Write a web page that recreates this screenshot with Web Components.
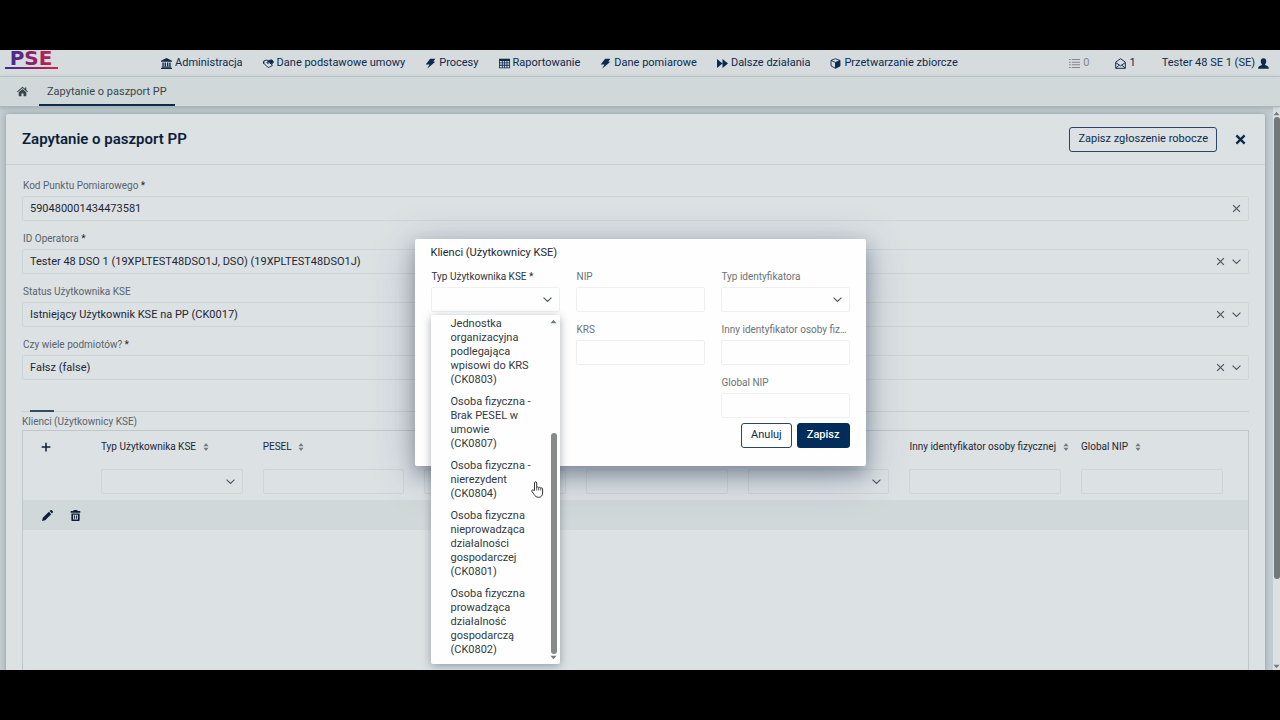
<!DOCTYPE html>
<html lang="pl">
<head>
<meta charset="utf-8">
<meta name="viewport" content="width=device-width, initial-scale=1">
<title>Zapytanie o paszport PP</title>
<style>
	html, body {
		height: 100%;
		margin: 0;
		background: #000;
	}
	body {
		font-family: Roboto, "Liberation Sans", sans-serif;
		font-size: 11px;
		line-height: 16px;
		color: #1d2733;
		--navy: #0c2a4d;
		--card: #dce1e4;
		--line: #c9d0d3;
	}
</style>
</head>
<body>
<app-shell>
	<app-header slot="header">
		<nav-item icon="bank">Administracja</nav-item>
		<nav-item icon="handshake">Dane podstawowe umowy</nav-item>
		<nav-item icon="bolt">Procesy</nav-item>
		<nav-item icon="table">Raportowanie</nav-item>
		<nav-item icon="bolt">Dane pomiarowe</nav-item>
		<nav-item icon="forward">Dalsze działania</nav-item>
		<nav-item icon="cube">Przetwarzanie zbiorcze</nav-item>
		<nav-item slot="user" icon="list" muted>0</nav-item>
		<nav-item slot="user" icon="mail">1</nav-item>
		<nav-item slot="user" icon="user" trailing>Tester 48 SE 1 (SE)</nav-item>
	</app-header>
	<tab-strip slot="tabs">Zapytanie o paszport PP</tab-strip>
	<form-card heading="Zapytanie o paszport PP" action="Zapisz zgłoszenie robocze">
		<form-field label="Kod Punktu Pomiarowego" value="590480001434473581" required clearable></form-field>
		<form-field label="ID Operatora" kind="select" value="Tester 48 DSO 1 (19XPLTEST48DSO1J, DSO) (19XPLTEST48DSO1J)" required clearable></form-field>
		<form-field label="Status Użytkownika KSE" kind="select" value="Istniejący Użytkownik KSE na PP (CK0017)" clearable></form-field>
		<form-field label="Czy wiele podmiotów?" kind="select" value="Fałsz (false)" required clearable></form-field>
		<client-grid></client-grid>
	</form-card>
	<client-dialog slot="overlay"></client-dialog>
</app-shell>

<script>
const ICONS = {
	bank: '<path d="M8 0 0 4v1.500h16V4zM2 6.500h2V12H2zM5.300 6.500h2V12h-2zM8.700 6.500h2V12h-2zM12 6.500h2V12h-2zM1 12.500h14V14H1zM0 14.500h16V16H0z"/>',
	handshake: '<path d="M1 4.500 4.500 3l3 .7M15 5l-3-2-3.500.5L5.500 7c1 1.300 2.500.8 3.500-.5l5 4M1.500 8l5 5c1 1 2 .8 2.500 0 1 .5 2 0 2.300-1 1 .2 1.900-.4 2-1.500" fill="none" stroke="currentColor" stroke-width="1.400"/><path d="M8 3.500 13 2l3 4-3 3-4-3-3 1z"/><path d="M0 5l2-1v5L0 8z"/>',
	bolt: '<path d="M7.500 1H15l-3 4.500h3L3 15.500 6.500 9.500H1z"/>',
	table: '<path fill-rule="evenodd" d="M0 1h16v14H0zM1.200 4.500v2h3v-2zm4.200 0v2h2.200v-2zm3.400 0v2H11v-2zm3.400 0v2h2.600v-2zM1.200 7.800v2h3v-2zm4.200 0v2h2.200v-2zm3.400 0v2H11v-2zm3.400 0v2h2.600v-2zM1.200 11.200v2.600h3v-2.600zm4.200 0v2.600h2.200v-2.600zm3.400 0v2.600H11v-2.600zm3.400 0v2.600h2.600v-2.600z"/>',
	forward: '<path d="M0 1.500 8 8l-8 6.500zM8 1.500 16 8l-8 6.500z"/>',
	cube: '<path d="M8 1 1.500 3.500v8L8 15l6.500-3.500v-8zM1.500 3.500 8 6.500l6.500-3M8 6.500V15" fill="none" stroke="currentColor" stroke-width="1.300"/><path d="M8 6.500l6.500-3v8L8 15z"/>',
	list: '<path d="M0 1.500h2.500v1.500H0zM4 1.500h12v1.500H4zM0 5.300h2.500v1.500H0zM4 5.300h12v1.500H4zM0 9.100h2.500v1.500H0zM4 9.100h12v1.500H4zM0 13h2.500v1.500H0zM4 13h12v1.500H4z"/>',
	mail: '<path d="M1 6 8 1l7 5v9H1zM1.500 7 8 11.500 14.500 7M1.500 14.500 6 10.500M14.500 14.500 10 10.500" fill="none" stroke="currentColor" stroke-width="1.400"/>',
	user: '<path d="M8 0.500c2.600 0 4 1.900 4 4.200S10.500 9.300 10 9.800c.5 1.100 5.800 1 5.800 5.700H.2c0-4.700 5.300-4.600 5.800-5.700-.5-.5-2-2.800-2-5.100S5.400.5 8 .5z"/>',
	home: '<path d="M8 1 0 8l1 1 7-6 7 6 1-1-2.500-2.200V2h-2v2zM8 4.500 2.500 9v6h4v-4h3v4h4V9z"/>',
	pencil: '<path d="M0 16l1.200-4.600L10 2.600 13.400 6l-8.800 8.800zM11 1.600 12.500.2c.5-.4 1.300-.3 1.700.1l1.500 1.500c.4.5.4 1.200 0 1.700L14.400 5z"/>',
	trash: '<path fill-rule="evenodd" d="M5.500 0h5l.7 1.500H15V4H1V1.500h3.800zM2 5h12v9.500c0 .9-.6 1.500-1.500 1.500h-9C2.600 16 2 15.400 2 14.500zm2.500 1.800v7h7v-7zM6 8h1.300v4.800H6zm2.700 0H10v4.800H8.700z"/>',
	plus: '<path d="M8 1v14M1 8h14" fill="none" stroke="currentColor" stroke-width="2.400"/>',
	close: '<path d="M2 2l12 12M14 2 2 14" fill="none" stroke="currentColor" stroke-width="3.400"/>',
	clear: '<path d="M2 2l12 12M14 2 2 14" fill="none" stroke="currentColor" stroke-width="2.200"/>',
	chevron: '<path d="M1 4.500 8 11.500l7-7" fill="none" stroke="currentColor" stroke-width="2"/>',
	sort: '<path d="M8 0l5 6.500H3zM8 16l5-6.500H3z"/>',
	up: '<path d="M8 4l7 8H1z"/>',
	down: '<path d="M8 12l7-8H1z"/>'
};

// <svg-icon name="..."> - size comes from --size, colour from the text
class SvgIcon extends HTMLElement {
	constructor() {
		super();
		this.attachShadow({mode: 'open'});
	}

	connectedCallback() {
		this.shadowRoot.innerHTML = `
		<style>
			:host { display: inline-block; flex: none; width: var(--size, 11px); height: var(--size, 11px); }
			svg { display: block; width: 100%; height: 100%; fill: currentColor; }
		</style>
		<svg viewBox="0 0 16 16" aria-hidden="true">${ICONS[this.getAttribute('name')]}</svg>`;
	}
}
customElements.define('svg-icon', SvgIcon);

// vertical scrollbar; --before, --thumb and --after share the track
class ScrollRail extends HTMLElement {
	constructor() {
		super();
		this.attachShadow({mode: 'open'}).innerHTML = `
		<style>
			:host { display: flex; flex-direction: column; align-items: center; color: #767c7d; }
			svg-icon { --size: 7px; }
			.track { flex: 1; align-self: stretch; display: flex; flex-direction: column; align-items: center; }
			.before { flex: var(--before, 0); }
			.thumb { flex: var(--thumb, 1); width: 6px; border-radius: 3px; background: var(--thumb-color, #71797b); }
			.after { flex: var(--after, 0); }
		</style>
		<svg-icon name="up"></svg-icon>
		<div class="track"><div class="before"></div><div class="thumb"></div><div class="after"></div></div>
		<svg-icon name="down"></svg-icon>`;
	}
}
customElements.define('scroll-rail', ScrollRail);

class AppShell extends HTMLElement {
	constructor() {
		super();
		this.attachShadow({mode: 'open'}).innerHTML = `
		<style>
			:host { display: block; box-sizing: border-box; height: 100vh; padding: 50px 0; }
			.screen {
				position: relative;
				display: flex;
				flex-direction: column;
				height: 100%;
				overflow: hidden;
				background: #c2cbcf;
			}
			.body { flex: 1; min-height: 0; display: flex; }
			main { flex: 1; min-width: 0; padding: 7px 8px 0 6px; overflow: hidden; }
			scroll-rail {
				width: 7px;
				padding-top: 3px;
				background: #dce1e4;
				--thumb: 460;
				--after: 84;
			}
		</style>
		<div class="screen">
			<slot name="header"></slot>
			<slot name="tabs"></slot>
			<div class="body">
				<main><slot></slot></main>
				<scroll-rail></scroll-rail>
			</div>
			<slot name="overlay"></slot>
		</div>`;
	}
}
customElements.define('app-shell', AppShell);

class AppHeader extends HTMLElement {
	constructor() {
		super();
		this.attachShadow({mode: 'open'}).innerHTML = `
		<style>
			:host { display: block; flex: none; }
			header {
				display: flex;
				align-items: center;
				height: 26px;
				padding: 0 11px 0 4px;
				background: #d6dbdd;
				border-bottom: 1px solid #bfc6c9;
			}
			.logo {
				align-self: flex-start;
				width: 54px;
				height: 20px;
				margin-right: 103px;
			}
			.logo svg { display: block; width: 100%; height: 100%; }
			nav, .user { display: flex; align-items: center; }
			nav { gap: 20px; }
			.user { gap: 26px; margin-left: auto; }
		</style>
		<header>
			<a class="logo" href="#" aria-label="PSE">
				<svg viewBox="0 0 54 20">
					<defs>
						<linearGradient id="brand" gradientUnits="userSpaceOnUse" x1="0" x2="54" y1="0" y2="0">
							<stop offset="0" stop-color="#2b2f9c"/>
							<stop offset=".5" stop-color="#86246a"/>
							<stop offset="1" stop-color="#d02444"/>
						</linearGradient>
					</defs>
					<text x="27" y="15" text-anchor="middle" font-family="DejaVu Sans" font-weight="700" font-size="20" fill="url(#brand)">PSE</text>
					<rect x="1" y="17" width="53" height="2" fill="url(#brand)"/>
				</svg>
			</a>
			<nav><slot></slot></nav>
			<div class="user"><slot name="user"></slot></div>
		</header>`;
	}
}
customElements.define('app-header', AppHeader);

class NavItem extends HTMLElement {
	constructor() {
		super();
		this.attachShadow({mode: 'open'});
	}

	connectedCallback() {
		this.shadowRoot.innerHTML = `
		<style>
			:host { display: block; }
			a { display: flex; align-items: center; gap: 3px; color: var(--navy); text-decoration: none; white-space: nowrap; }
			:host([trailing]) a { flex-direction: row-reverse; }
			:host([muted]) a { color: #80878b; }
		</style>
		<a href="#"><svg-icon name="${this.getAttribute('icon')}"></svg-icon><span><slot></slot></span></a>`;
	}
}
customElements.define('nav-item', NavItem);

class TabStrip extends HTMLElement {
	constructor() {
		super();
		this.attachShadow({mode: 'open'}).innerHTML = `
		<style>
			:host {
				display: block;
				flex: none;
				position: relative;
				background: #d1d8da;
				border-bottom: 1px solid #adb6ba;
				box-shadow: 0 1px 4px rgba(60, 75, 85, .25);
			}
			nav { display: flex; height: 29px; padding-left: 17px; }
			a { display: flex; align-items: center; color: #3a444c; text-decoration: none; }
			.current { margin-left: 11px; padding: 0 8px; box-shadow: inset 0 -2px var(--navy); }
		</style>
		<nav>
			<a href="#" aria-label="Start"><svg-icon name="home"></svg-icon></a>
			<a class="current" href="#" aria-current="page"><slot></slot></a>
		</nav>`;
	}
}
customElements.define('tab-strip', TabStrip);

class FormCard extends HTMLElement {
	constructor() {
		super();
		this.attachShadow({mode: 'open'});
	}

	connectedCallback() {
		this.shadowRoot.innerHTML = `
		<style>
			:host {
				display: block;
				min-height: 100%;
				background: var(--card);
				border-radius: 2px;
				box-shadow: 0 0 5px rgba(60, 80, 95, .4);
			}
			header {
				display: flex;
				align-items: center;
				height: 50px;
				padding: 0 19px 0 16px;
				border-bottom: 1px solid var(--line);
			}
			h1 { flex: 1; margin: 0; font-size: 15px; font-weight: 600; line-height: 20px; color: #0d1f38; }
			button { font: inherit; color: var(--navy); background: none; cursor: pointer; }
			.save { height: 25px; padding: 0 8px; border: 1px solid #2c4468; border-radius: 3px; }
			.close { display: flex; margin-left: 18px; padding: 0; border: 0; }
			.fields { padding: 11px 16px 0; }
		</style>
		<header>
			<h1>${this.getAttribute('heading')}</h1>
			<button class="save" type="button">${this.getAttribute('action')}</button>
			<button class="close" type="button" aria-label="Zamknij"><svg-icon name="close"></svg-icon></button>
		</header>
		<div class="fields"><slot></slot></div>`;
	}
}
customElements.define('form-card', FormCard);

// input or select box with its clear and chevron marks, used in fields and in grid filters
class ControlBox extends HTMLElement {
	constructor() {
		super();
		this.attachShadow({mode: 'open'});
	}

	connectedCallback() {
		const label = this.getAttribute('label') || '';
		const value = this.getAttribute('value') || '';
		const isSelect = this.getAttribute('kind') === 'select';
		const caption = label ? `<label for="control">${label}${this.hasAttribute('required') ? ' <span>*</span>' : ''}</label>` : '';
		const name = label ? '' : `aria-label="${this.getAttribute('name')}"`;
		const control = isSelect
			? `<select id="control" ${name}><option>${value}</option></select>`
			: `<input id="control" type="text" ${name} value="${value}">`;
		this.shadowRoot.innerHTML = `
		<style>
			:host { display: block; min-width: 0; }
			label {
				display: block;
				overflow: hidden;
				padding-left: 1px;
				font-size: 10px;
				line-height: 20px;
				color: var(--label, #59636a);
				white-space: nowrap;
				text-overflow: ellipsis;
			}
			label span { color: #1d2733; }
			.box { display: grid; align-items: center; }
			.box > * { grid-area: 1 / 1; }
			input, select {
				box-sizing: border-box;
				width: 100%;
				min-width: 0;
				height: 25px;
				margin: 0;
				padding: 0 7px;
				border: 1px solid var(--edge, #ced5d8);
				border-radius: 2px;
				background: none;
				color: inherit;
				font: inherit;
				appearance: none;
				outline: none;
			}
			.marks { display: flex; gap: 7px; justify-self: end; padding-right: 8px; color: #4d575e; pointer-events: none; }
			.marks button { display: flex; padding: 0; border: 0; background: none; color: inherit; pointer-events: auto; }
			.marks svg-icon { --size: 9px; }
		</style>
		${caption}
		<div class="box">
			${control}
			<span class="marks">
				${this.hasAttribute('clearable') ? '<button type="button" aria-label="Wyczyść"><svg-icon name="clear"></svg-icon></button>' : ''}
				${isSelect ? '<svg-icon name="chevron"></svg-icon>' : ''}
			</span>
		</div>`;
	}
}
customElements.define('control-box', ControlBox);

class FormField extends ControlBox {
	connectedCallback() {
		super.connectedCallback();
		this.style.marginBottom = '8px';
	}
}
customElements.define('form-field', FormField);

class ClientGrid extends HTMLElement {
	constructor() {
		super();
		const columns = [
			['Typ Użytkownika KSE', 'select'],
			['PESEL', 'text'],
			['NIP', 'text'],
			['KRS', 'text'],
			['Typ identyfikatora', 'select'],
			['Inny identyfikator osoby fizycznej', 'text', 'wide'],
			['Global NIP', 'text']
		];
		this.attachShadow({mode: 'open'}).innerHTML = `
		<style>
			:host { display: block; font-size: 10px; }
			.rule { height: 1px; margin-top: 31px; border-top: 1px solid var(--line); }
			.rule::before { content: ""; display: block; width: 24px; height: 2px; margin: -2px 0 0 8px; background: #334e64; }
			h2 { margin: 0; font-size: 10px; font-weight: 400; line-height: 17px; color: #59636a; }
			.frame { min-height: 260px; border: 1px solid #bfc7cb; }
			table { width: 100%; border-collapse: collapse; table-layout: fixed; }
			col.tools { width: 68px; }
			col.field { width: 13.200%; }
			col.wide { width: 14%; }
			th { height: 32px; padding: 0 10px; text-align: left; font-weight: 400; white-space: nowrap; }
			th svg-icon { --size: 8px; margin-left: 3px; color: #727b80; vertical-align: -1px; }
			.filters td { height: 37px; padding: 0 10px; }
			.row td { height: 30px; padding: 0 0 0 19px; background: #d1d8da; }
			button { display: inline-flex; padding: 0; border: 0; background: none; color: #0d1f38; vertical-align: middle; }
			th button { margin-left: 8px; }
			.row button + button { margin-left: 15px; }
			.add svg-icon { --size: 10px; margin: 0; color: #0d1f38; }
		</style>
		<div class="rule"></div>
		<h2>Klienci (Użytkownicy KSE)</h2>
		<div class="frame">
			<table>
				<colgroup>
					<col class="tools">
					${columns.map(c => `<col class="${c[2] || 'field'}">`).join('')}
					<col>
				</colgroup>
				<thead>
					<tr>
						<th><button class="add" type="button" aria-label="Dodaj"><svg-icon name="plus"></svg-icon></button></th>
						${columns.map(c => `<th scope="col">${c[0]} <svg-icon name="sort"></svg-icon></th>`).join('')}
						<th></th>
					</tr>
					<tr class="filters">
						<td></td>
						${columns.map(c => `<td><control-box kind="${c[1]}" name="${c[0]}"></control-box></td>`).join('')}
						<td></td>
					</tr>
				</thead>
				<tbody>
					<tr class="row">
						<td colspan="9">
							<button type="button" aria-label="Edytuj"><svg-icon name="pencil"></svg-icon></button>
							<button type="button" aria-label="Usuń"><svg-icon name="trash"></svg-icon></button>
						</td>
					</tr>
				</tbody>
			</table>
		</div>`;
	}
}
customElements.define('client-grid', ClientGrid);

// open list of a select, scrolled to its end
class OptionList extends HTMLElement {
	constructor() {
		super();
		this.attachShadow({mode: 'open'}).innerHTML = `
		<style>
			:host {
				display: flex;
				background: #fefefe;
				border-radius: 2px;
				box-shadow: 0 2px 8px rgba(40, 50, 60, .4);
			}
			ul { flex: 1; min-width: 0; margin: 0; padding: 2px 0 7px; list-style: none; }
			::slotted(li) { padding: 0 14px 8px 20px; line-height: 14px; color: #333a40; }
			::slotted(li:last-child) { padding-bottom: 0; }
			scroll-rail {
				width: 8px;
				margin: 3px 2px 3px 0;
				--before: 107;
				--thumb: 217;
				--thumb-color: #868a89;
			}
		</style>
		<ul role="listbox" aria-label="Typ Użytkownika KSE"><slot></slot></ul>
		<scroll-rail></scroll-rail>`;
	}
}
customElements.define('option-list', OptionList);

class ClientDialog extends HTMLElement {
	constructor() {
		super();
		this.attachShadow({mode: 'open'}).innerHTML = `
		<style>
			:host {
				position: absolute;
				inset: 0;
				display: flex;
				align-items: center;
				justify-content: center;
				padding-bottom: 16px;
				--edge: #eef0f0;
				--label: #6b7378;
			}
			dialog {
				position: static;
				box-sizing: border-box;
				width: 451px;
				max-width: 100%;
				margin: 0;
				padding: 0 16px 18px;
				border: 0;
				border-radius: 2px;
				background: #fefefe;
				color: inherit;
				box-shadow: 0 8px 18px rgba(40, 55, 80, .38), 0 8px 44px rgba(50, 70, 100, .3);
			}
			h2 { margin: 0; font-size: 11px; font-weight: 400; line-height: 28px; }
			.columns { display: grid; grid-template-columns: repeat(3, minmax(0, 1fr)); gap: 16px; }
			.column form-field:last-of-type { margin-bottom: 0 !important; }
			.open { position: relative; --label: #2c353c; }
			option-list { position: absolute; top: 48px; left: 0; right: 0; z-index: 1; }
			.pointer { position: absolute; top: 214px; left: 100px; z-index: 2; width: 13px; height: 17px; }
			footer { display: flex; justify-content: flex-end; gap: 5px; margin-top: 5px; }
			button {
				height: 25px;
				padding: 0 9px;
				border: 1px solid #2c4468;
				border-radius: 3px;
				background: #fefefe;
				color: var(--navy);
				font: inherit;
			}
			.primary { background: #022d5a; border-color: #022d5a; color: #fff; font-weight: 500; }
		</style>
		<dialog open aria-labelledby="title">
			<h2 id="title">Klienci (Użytkownicy KSE)</h2>
			<div class="columns">
				<div class="column open">
					<form-field label="Typ Użytkownika KSE" kind="select" required></form-field>
					<option-list>
						<li role="option">Jednostka organizacyjna podlegająca wpisowi do KRS (CK0803)</li>
						<li role="option">Osoba fizyczna - Brak PESEL w umowie (CK0807)</li>
						<li role="option">Osoba fizyczna - nierezydent (CK0804)</li>
						<li role="option">Osoba fizyczna nieprowadząca działalności gospodarczej (CK0801)</li>
						<li role="option">Osoba fizyczna prowadząca działalność gospodarczą (CK0802)</li>
					</option-list>
					<svg class="pointer" viewBox="0 0 13 17" aria-hidden="true">
						<path d="M3.500 9.500V2c0-1.600 2.200-1.600 2.200 0v4.500c.3-.8 1.900-.7 2 .3.400-.8 1.900-.6 2 .4.500-.6 1.900-.4 1.900.8v4c0 2.500-1.300 4.300-4 4.300-2.400 0-3.300-1-4.300-2.600L1 10.500C.3 9.300 1.600 8.300 2.500 9.200z" fill="#fff" stroke="#333" stroke-width="1"/>
						<path d="M5.700 6.500v3M7.700 7v2.500M9.700 7.300v2.200" fill="none" stroke="#333" stroke-width=".8"/>
					</svg>
				</div>
				<div class="column">
					<form-field label="NIP"></form-field>
					<form-field label="KRS"></form-field>
				</div>
				<div class="column">
					<form-field label="Typ identyfikatora" kind="select"></form-field>
					<form-field label="Inny identyfikator osoby fizycznej"></form-field>
					<form-field label="Global NIP"></form-field>
				</div>
			</div>
			<footer>
				<button type="button">Anuluj</button>
				<button class="primary" type="button">Zapisz</button>
			</footer>
		</dialog>`;
	}
}
customElements.define('client-dialog', ClientDialog);
</script>
</body>
</html>
